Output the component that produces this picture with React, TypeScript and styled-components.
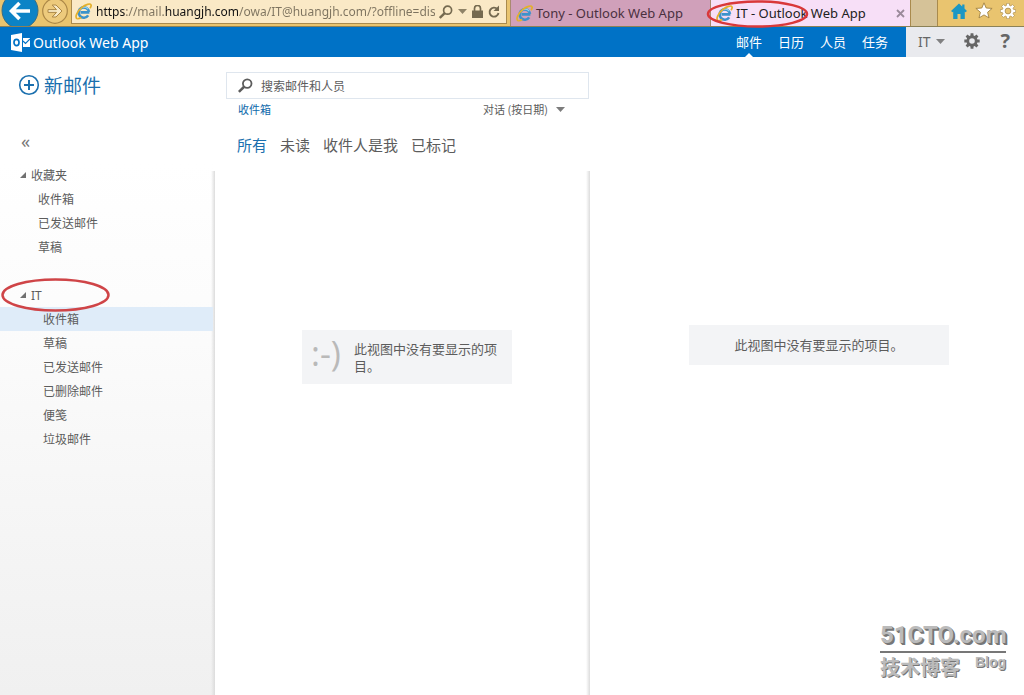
import React, { useState } from "react";
import styled, { createGlobalStyle } from "styled-components";

const latin = `"Noto Sans", "Noto Sans CJK SC", sans-serif`;
const cjk = `"Noto Sans CJK SC", "Noto Sans", sans-serif`;

const GlobalStyle = createGlobalStyle`
  *, *::before, *::after { box-sizing: border-box; }
  body { margin: 0; background: #fff; color: #5c5c5c; font-family: ${latin}; font-size: 12px; }
  button, input { font: inherit; color: inherit; }
  button { border: 0; padding: 0; background: none; cursor: pointer; }
  ul { list-style: none; margin: 0; padding: 0; }
  svg { display: block; flex: none; }
`;

const Page = styled.div`
  display: flex;
  flex-direction: column;
  min-height: 100vh;
  position: relative;
`;

/* Browser frame */
const BrowserBar = styled.header`
  display: flex;
  height: 27px;
  background: #e9c46f;
  border-bottom: 1px solid #8b8157;
`;
const Navigation = styled.div`
  display: flex;
  flex: 1;
  min-width: 0;
  padding-right: 3px;
`;
const NavButton = styled.button<{ $width: number }>`
  width: ${(p) => p.$width}px;
  height: 26px;
  overflow: hidden;
`;
const AddressBox = styled.form`
  display: flex;
  align-items: center;
  flex: 1;
  min-width: 0;
  height: 24px;
  padding: 0 5px 0 3px;
  gap: 4px;
  background: #fae9c6;
  border: 1px solid #a98a4d;
  border-top: 0;
`;
const AddressInput = styled.input`
  flex: 1;
  min-width: 0;
  height: 22px;
  border: 0;
  outline: 0;
  padding: 0;
  font-size: 12px;
  color: transparent;
  background: linear-gradient(90deg, #111 29px, #7d735f 29px, #7d735f 69px, #111 69px, #111 143px, #7d735f 143px);
  background-clip: text;
  -webkit-background-clip: text;
`;
const AddressTools = styled.div`
  display: flex;
  align-items: center;
  gap: 5px;
  color: #756a50;
`;
const Tabs = styled.div`
  display: flex;
`;
const Tab = styled.div<{ $active?: boolean }>`
  position: relative;
  display: flex;
  align-items: center;
  width: 200px;
  height: 26px;
  padding: 0 5px;
  gap: 3px;
  border-left: 1px solid #a98a70;
  background: ${(p) => (p.$active ? "#f7dff7" : "#d0a0ba")};
  color: ${(p) => (p.$active ? "#222" : "#4a3040")};
`;
const TabTitle = styled.button`
  flex: 1;
  text-align: left;
  font-size: 13px;
  line-height: 20px;
  white-space: nowrap;
`;
const NewTab = styled.button`
  width: 28px;
  height: 26px;
  background: #d5c298;
  border: solid #a98a4d;
  border-width: 0 1px;
`;
const BrowserTools = styled.div`
  display: flex;
  align-items: center;
  width: 86px;
  height: 21px;
  padding: 0 8px 0 13px;
  justify-content: space-between;
`;
const TabMark = styled.svg`
  position: absolute;
  left: -5px;
  top: 0;
  z-index: 2;
  pointer-events: none;
`;

/* Application header */
const AppBar = styled.div`
  display: flex;
  height: 30px;
  background: #0072c6;
  color: #fff;
`;
const Brand = styled.div`
  display: flex;
  align-items: center;
  flex: 1;
  gap: 3px;
  padding-left: 11px;
  font-size: 14px;
`;
const Modules = styled.nav`
  display: flex;
  gap: 16px;
  padding-right: 18px;
`;
const ModuleLink = styled.a<{ $active?: boolean }>`
  position: relative;
  color: #fff;
  text-decoration: none;
  font-family: ${cjk};
  font-size: 13px;
  line-height: 30px;
  &::after {
    content: "";
    display: ${(p) => (p.$active ? "block" : "none")};
    position: absolute;
    left: 9px;
    bottom: 0;
    border: 4px solid transparent;
    border-top: 0;
    border-bottom-color: #fff;
  }
`;
const AccountArea = styled.div`
  display: flex;
  align-items: center;
  justify-content: space-between;
  width: 118px;
  padding: 0 14px 2px 12px;
  background: #e9eaee;
  color: #666;
`;
const AccountButton = styled.button`
  display: flex;
  align-items: center;
  gap: 5px;
  font-size: 14px;
`;
const HelpButton = styled.button`
  font-size: 20px;
  font-weight: 700;
  line-height: 24px;
`;

/* Mail workspace */
const Workspace = styled.div`
  display: flex;
  flex: 1;
`;
const Sidebar = styled.aside`
  display: flex;
  flex-direction: column;
  width: 215px;
  flex: none;
`;
const SidebarTop = styled.div`
  display: flex;
  flex-direction: column;
  align-items: flex-start;
  justify-content: space-between;
  height: 106px;
  padding: 11px 18px 10px;
`;
const NewMail = styled.button`
  display: flex;
  align-items: center;
  gap: 4px;
  color: #1a6fae;
  font-family: ${cjk};
  font-size: 19px;
  line-height: 34px;
`;
const Collapse = styled.button`
  padding-left: 3px;
  font-size: 18px;
  line-height: 24px;
  color: #777;
`;
const Folders = styled.nav`
  display: flex;
  flex-direction: column;
  gap: 24px;
  flex: 1;
  padding-right: 2px;
  background:
    linear-gradient(90deg, rgba(210, 210, 210, 0), #dcdcdc) right top 8px / 4px 100% no-repeat,
    linear-gradient(#fff, #fbfbfb 180px, #f0f0f0);
`;
const GroupHeader = styled.button`
  position: relative;
  display: flex;
  align-items: center;
  width: 100%;
  height: 24px;
  gap: 5px;
  padding-left: 20px;
  font-size: 12px;
`;
const FolderMark = styled.svg`
  position: absolute;
  left: 1px;
  top: -5px;
  z-index: 2;
  pointer-events: none;
`;
const FolderLink = styled.a<{ $indent: number; $selected?: boolean }>`
  display: block;
  height: 24px;
  padding-left: ${(p) => p.$indent}px;
  background: ${(p) => (p.$selected ? "#dfecf9" : "transparent")};
  color: #5c5c5c;
  text-decoration: none;
  font-family: ${cjk};
  line-height: 24px;
`;

const MessagePane = styled.section`
  display: flex;
  flex-direction: column;
  width: 375px;
  flex: none;
`;
const PaneTop = styled.div`
  height: 114px;
  padding: 15px 1px 0 11px;
`;
const SearchBox = styled.form`
  display: flex;
  align-items: center;
  height: 27px;
  gap: 8px;
  padding: 0 11px;
  border: 1px solid #dfe6ee;
`;
const SearchInput = styled.input`
  flex: 1;
  border: 0;
  outline: 0;
  padding: 0;
  background: none;
  font-family: ${cjk};
  &::placeholder { color: #5c5c5c; opacity: 1; }
`;
const ListHeading = styled.div`
  display: flex;
  justify-content: space-between;
  padding: 0 24px 0 12px;
  font-family: ${cjk};
  font-size: 11px;
  line-height: 20px;
`;
const FolderName = styled.span`
  color: #0f69ab;
`;
const SortButton = styled.button`
  display: flex;
  align-items: center;
  gap: 8px;
`;
const Filters = styled.div`
  display: flex;
  gap: 13px;
  padding: 14px 0 0 11px;
`;
const Filter = styled.button<{ $active?: boolean }>`
  color: ${(p) => (p.$active ? "#1a6fae" : "#5c5c5c")};
  font-family: ${cjk};
  font-size: 15px;
  line-height: 24px;
`;
const MessageList = styled.div`
  display: flex;
  justify-content: center;
  align-items: flex-start;
  flex: 1;
  padding: 159px 8px 0;
  background: linear-gradient(90deg, rgba(210, 210, 210, 0), #dcdcdc) right top / 4px 100% no-repeat;
`;
const EmptyCard = styled.div`
  display: flex;
  align-items: flex-start;
  width: 210px;
  height: 54px;
  margin-left: 9px;
  gap: 8px;
  padding: 0 10px 0 9px;
  background: #f3f4f6;
`;
const Smiley = styled.span`
  flex: none;
  width: 35px;
  color: #b9b9b9;
  font-family: "Open Sans", sans-serif;
  font-size: 34px;
  line-height: 46px;
`;
const EmptyText = styled.p`
  margin: 0;
  padding-top: 10px;
  font-family: ${cjk};
  font-size: 13px;
  line-height: 17px;
`;
const ReadingPane = styled.main`
  display: flex;
  flex: 1;
  align-items: flex-start;
  justify-content: center;
  padding: 268px 0 0 24px;
`;
const ReadingEmpty = styled.p`
  width: 260px;
  margin: 0;
  background: #f3f4f6;
  font-family: ${cjk};
  font-size: 13px;
  line-height: 40px;
  text-align: center;
`;

/* Site watermark */
const Watermark = styled.div`
  position: absolute;
  right: 18px;
  bottom: 14px;
  width: 126px;
  color: #bbb;
  text-shadow: 1px 1px 0 #777;
  font-weight: 700;
`;
const WatermarkSite = styled.div`
  font-family: Roboto, "Liberation Sans", sans-serif;
  font-size: 24px;
  font-weight: 700;
  line-height: 32px;
  white-space: nowrap;
  text-shadow: 1px 1px 0 #777, 2px 2px 0 #777;
  border-bottom: 2px solid #777;
`;
const WatermarkCaption = styled.div`
  display: flex;
  justify-content: space-between;
  font-family: ${cjk};
  font-size: 20px;
  line-height: 28px;
`;
const WatermarkBlog = styled.span`
  font-family: "Liberation Sans", sans-serif;
  font-size: 14px;
  line-height: 18px;
`;

const IeLogo = () => (
  <svg width="17" height="17" viewBox="0 0 17 17" fill="none" aria-hidden="true">
    <path d="M14.400 9.400H5.500M14 9A5.200 5.200 0 1 0 13.200 12.400" stroke="#3b93cb" strokeWidth="2.600" />
    <path d="M13.200 6.300A5 5 0 0 0 4.600 7" stroke="#8fd0f0" strokeWidth="1.100" />
    <path d="M2.200 15.600C-.500 14.500 2 8.300 6.600 4.600c4-3.300 8.600-4.400 9.400-2.800.500 1-.200 2.400-.900 3.500" stroke="#e3b02c" strokeWidth="1.700" />
    <path d="M2.200 15.600c1 .400 2.500-.200 4-1.100" stroke="#e3b02c" strokeWidth="1.500" />
  </svg>
);

const SearchIcon = ({ size }: { size: number }) => (
  <svg width={size} height={size} viewBox="0 0 14 14" fill="none" stroke="currentColor" aria-hidden="true">
    <circle cx="8.600" cy="5.200" r="4" strokeWidth="1.700" />
    <path d="M5.700 8.200.8 13" strokeWidth="2.400" />
  </svg>
);

const DownArrow = () => (
  <svg width="9" height="5" viewBox="0 0 9 5" fill="currentColor" opacity=".8" aria-hidden="true">
    <path d="M0 0h9L4.500 5z" />
  </svg>
);

const gearPath = (cx: number, cy: number, outer: number, inner: number) => {
  const points: string[] = [];
  for (let i = 0; i < 8; i++) {
    const a = (i * Math.PI) / 4;
    [[-0.28, inner], [-0.18, outer], [0.18, outer], [0.28, inner]].forEach(([d, r]) =>
      points.push(`${(cx + Math.sin(a + d) * r).toFixed(2)} ${(cy - Math.cos(a + d) * r).toFixed(2)}`)
    );
  }
  return `M${points.join("L")}Z`;
};

const Gear = ({ hollow }: { hollow?: boolean }) => (
  <svg width="16" height="16" viewBox="0 0 16 16" aria-hidden="true">
    {hollow ? (
      <>
        <path d={gearPath(8, 8, 7.8, 5.8)} fill="#fff" stroke="#a08140" strokeWidth=".6" />
        <circle cx="8" cy="8" r="2.900" fill="#e9c46f" stroke="#a08140" strokeWidth=".7" />
      </>
    ) : (
      <path
        d={`${gearPath(8, 8, 7.8, 5.6)}M8 5.200a2.800 2.800 0 1 0 0 5.600a2.800 2.800 0 1 0 0-5.600Z`}
        fill="#666"
        fillRule="evenodd"
      />
    )}
  </svg>
);

const Expander = () => (
  <svg width="6" height="6" viewBox="0 0 6 6" aria-hidden="true">
    <path d="M6 0v6H0z" fill="#707070" />
  </svg>
);

type Group = { name: string; indent: number; marked?: boolean; folders: string[] };
const groups: Group[] = [
  { name: "收藏夹", indent: 38, folders: ["收件箱", "已发送邮件", "草稿"] },
  { name: "IT", indent: 43, marked: true, folders: ["收件箱", "草稿", "已发送邮件", "已删除邮件", "便笺", "垃圾邮件"] },
];
const filters = ["所有", "未读", "收件人是我", "已标记"];
const modules = ["邮件", "日历", "人员", "任务"];

export default function App() {
  const [filter, setFilter] = useState(filters[0]);
  const [selected, setSelected] = useState("IT/收件箱");

  return (
    <Page>
      <GlobalStyle />
      <BrowserBar>
        <Navigation>
          <NavButton $width={41} aria-label="后退">
            <svg width="41" height="26" viewBox="0 0 41 26" fill="none">
              <circle cx="20" cy="10.500" r="18" fill="#0c83c6" stroke="#3a6d82" strokeWidth="1" />
              <path d="M30 11H12M19.500 3 11.500 11l8 8" stroke="#fff" strokeWidth="3.600" />
            </svg>
          </NavButton>
          <NavButton $width={30} aria-label="前进">
            <svg width="30" height="26" viewBox="0 0 30 26" fill="none">
              <circle cx="14" cy="11" r="12.300" fill="#edca7c" stroke="#ac8847" strokeWidth="1.200" />
              <path d="M7 9.600h8.500L11.200 5h3.800l6 6-6 6h-3.800l4.300-4.600H7z" fill="#f8e9c4" stroke="#ac8847" strokeWidth="1" />
            </svg>
          </NavButton>
          <AddressBox onSubmit={(e) => e.preventDefault()}>
            <IeLogo />
            <AddressInput aria-label="地址" defaultValue="https://mail.huangjh.com/owa/IT@huangjh.com/?offline=disabled" />
            <AddressTools>
              <SearchIcon size={14} />
              <DownArrow />
              <svg width="11" height="13" viewBox="0 0 11 13" aria-hidden="true">
                <path d="M0 5.500h11V13H0z" fill="currentColor" />
                <path d="M2.500 6V3.500a3 3 0 0 1 6 0V6" fill="none" stroke="currentColor" strokeWidth="1.700" />
              </svg>
              <svg width="13" height="14" viewBox="0 0 13 14" aria-hidden="true">
                <path d="M9.300 4A4.500 4.500 0 1 0 10.500 8" fill="none" stroke="currentColor" strokeWidth="1.900" />
                <path d="M11 .5v5.500H5.500z" fill="currentColor" />
              </svg>
            </AddressTools>
          </AddressBox>
        </Navigation>
        <Tabs>
          <Tab>
            <IeLogo />
            <TabTitle>Tony - Outlook Web App</TabTitle>
          </Tab>
          <Tab $active>
            <IeLogo />
            <TabTitle>IT - Outlook Web App</TabTitle>
            <button aria-label="关闭标签">
              <svg width="9" height="9" viewBox="0 0 9 9" stroke="#9b8a9b" strokeWidth="1.800">
                <path d="m1 1 7 7M8 1 1 8" />
              </svg>
            </button>
            <TabMark width="103" height="28" viewBox="0 0 103 28" fill="none" aria-hidden="true">
              <ellipse cx="51.500" cy="14" rx="49.500" ry="12.500" stroke="#d9383a" strokeWidth="2.500" />
            </TabMark>
          </Tab>
          <NewTab aria-label="新建标签" />
        </Tabs>
        <BrowserTools>
          <button aria-label="主页">
            <svg width="16" height="16" viewBox="0 0 16 16">
              <path d="M8 .5 0 8l1.500 1.300.7-.6V16H6.500v-5h3v5h4.300V8.700l.7.6L16 8l-2.500-2.400V1.500h-2.300v2z" fill="#1c97c4" />
            </svg>
          </button>
          <button aria-label="收藏">
            <svg width="18" height="17" viewBox="0 0 18 17">
              <path d="m9 .8 2.200 5.200 5.900.4-4.500 3.900 1.400 5.600L9 12.900l-5 3 1.400-5.600L.9 6.400 6.800 6z" fill="#fff" stroke="#a08140" strokeWidth=".9" />
            </svg>
          </button>
          <button aria-label="工具"><Gear hollow /></button>
        </BrowserTools>
      </BrowserBar>

      <AppBar>
        <Brand>
          <svg width="19" height="19" viewBox="0 0 19 19" aria-hidden="true">
            <path d="M0 2 11 0v19L0 17z" fill="#fff" />
            <ellipse cx="5.500" cy="9.500" rx="2.500" ry="3.200" fill="none" stroke="#0072c6" strokeWidth="1.700" />
            <path d="M12 5h7v9h-7z" fill="#fff" />
            <path d="m12 8 2.500 2.500L19 6" fill="none" stroke="#0072c6" strokeWidth="1.200" />
          </svg>
          <span>Outlook Web App</span>
        </Brand>
        <Modules>
          {modules.map((name, i) => (
            <ModuleLink key={name} href="#" $active={i === 0}>{name}</ModuleLink>
          ))}
        </Modules>
        <AccountArea>
          <AccountButton>IT <DownArrow /></AccountButton>
          <button aria-label="设置"><Gear /></button>
          <HelpButton aria-label="帮助">?</HelpButton>
        </AccountArea>
      </AppBar>

      <Workspace>
        <Sidebar>
          <SidebarTop>
            <NewMail>
              <svg width="22" height="22" viewBox="0 0 22 22" fill="none" stroke="currentColor" aria-hidden="true">
                <circle cx="11" cy="11" r="9.300" strokeWidth="1.600" />
                <path d="M11 6v10M6 11h10" strokeWidth="2" />
              </svg>
              新邮件
            </NewMail>
            <Collapse aria-label="折叠">«</Collapse>
          </SidebarTop>
          <Folders>
            {groups.map((group) => (
              <div key={group.name}>
                <GroupHeader>
                  <Expander />
                  {group.name}
                  {group.marked && (
                    <FolderMark width="109" height="35" viewBox="0 0 109 35" fill="none" aria-hidden="true">
                      <ellipse cx="54.500" cy="17" rx="53" ry="15.500" stroke="#cf4447" strokeWidth="2.500" />
                    </FolderMark>
                  )}
                </GroupHeader>
                <ul>
                  {group.folders.map((folder) => {
                    const id = `${group.name}/${folder}`;
                    return (
                      <li key={id}>
                        <FolderLink href="#" $indent={group.indent} $selected={selected === id} onClick={() => setSelected(id)}>
                          {folder}
                        </FolderLink>
                      </li>
                    );
                  })}
                </ul>
              </div>
            ))}
          </Folders>
        </Sidebar>

        <MessagePane>
          <PaneTop>
            <SearchBox onSubmit={(e) => e.preventDefault()}>
              <SearchIcon size={15} />
              <SearchInput aria-label="搜索邮件和人员" placeholder="搜索邮件和人员" />
            </SearchBox>
            <ListHeading>
              <FolderName>收件箱</FolderName>
              <SortButton>对话 (按日期) <DownArrow /></SortButton>
            </ListHeading>
            <Filters>
              {filters.map((name) => (
                <Filter key={name} $active={filter === name} onClick={() => setFilter(name)}>{name}</Filter>
              ))}
            </Filters>
          </PaneTop>
          <MessageList>
            <EmptyCard>
              <Smiley>:-)</Smiley>
              <EmptyText>此视图中没有要显示的项目。</EmptyText>
            </EmptyCard>
          </MessageList>
        </MessagePane>

        <ReadingPane>
          <ReadingEmpty>此视图中没有要显示的项目。</ReadingEmpty>
        </ReadingPane>
      </Workspace>

      <Watermark>
        <WatermarkSite>51CTO.com</WatermarkSite>
        <WatermarkCaption>
          技术博客
          <WatermarkBlog>Blog</WatermarkBlog>
        </WatermarkCaption>
      </Watermark>
    </Page>
  );
}
